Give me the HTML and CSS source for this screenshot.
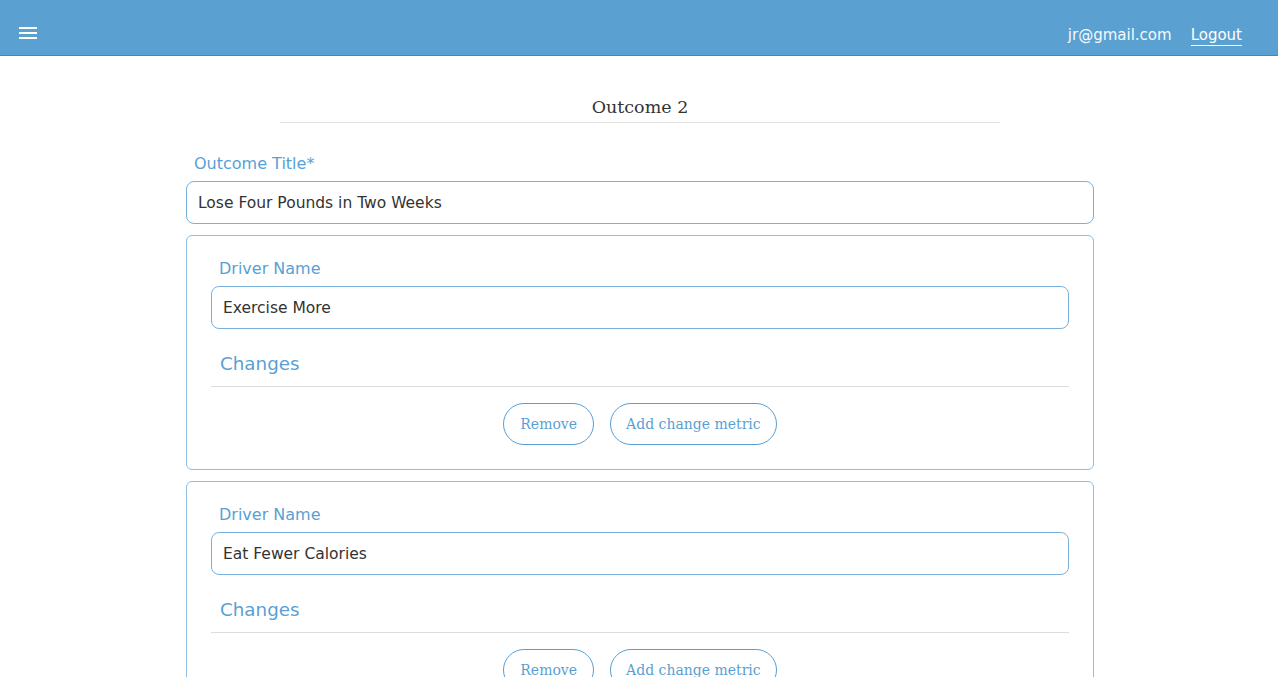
FILE: index.html
```html
<!DOCTYPE html>
<html>
<head>
<meta charset="utf-8">
<link rel="stylesheet" href="styles.css">
</head>
<body>
<header class="topbar">
  <button class="menu-btn" aria-label="menu">
    <svg width="18" height="12" viewBox="0 0 18 12"><rect x="0" y="0" width="18" height="2" fill="#fff"/><rect x="0" y="5" width="18" height="2" fill="#fff"/><rect x="0" y="10" width="18" height="2" fill="#fff"/></svg>
  </button>
  <div class="user">
    <span class="email">jr@gmail.com</span>
    <a class="logout" href="#">Logout</a>
  </div>
</header>
<main class="page">
  <h2 class="heading">Outcome 2</h2>
  <div class="form">
    <label class="label">Outcome Title*</label>
    <div class="input">Lose Four Pounds in Two Weeks</div>

    <section class="card">
      <label class="label">Driver Name</label>
      <div class="input">Exercise More</div>
      <h3 class="changes">Changes</h3>
      <div class="actions">
        <button class="pill">Remove</button>
        <button class="pill">Add change metric</button>
      </div>
    </section>

    <section class="card">
      <label class="label">Driver Name</label>
      <div class="input">Eat Fewer Calories</div>
      <h3 class="changes">Changes</h3>
      <div class="actions">
        <button class="pill">Remove</button>
        <button class="pill">Add change metric</button>
      </div>
    </section>
  </div>
</main>
</body>
</html>
```
FILE: styles.css
```css
* { box-sizing: border-box; }
html, body { margin: 0; padding: 0; background: #fff; }
body { font-family: "DejaVu Sans", Verdana, sans-serif; color: #333; height: 677px; overflow: hidden; }

.topbar {
  height: 56px;
  background: #5aa1d1;
  border-bottom: 1px solid #3f88c4;
  display: flex;
  align-items: center;
  justify-content: space-between;
  padding: 10px 36px 0 19px;
}
.menu-btn { background: none; border: 0; padding: 0; display: flex; cursor: pointer; }
.user { display: flex; align-items: center; gap: 19px; color: #fff; font-size: 15px; margin-top: 4px; }
.email { color: #f4f9fd; }
.logout { color: #fff; text-decoration: none; border-bottom: 1.5px solid #fff; padding-bottom: 1px; line-height: 18px; margin-top: 2px; }

.page { width: 910px; margin: 0 auto; padding-left: 2px; }
.heading {
  width: 720px; margin: 40px auto 0;
  font-family: "DejaVu Serif", Georgia, serif;
  font-weight: normal; font-size: 17.5px; color: #333;
  text-align: center; padding-bottom: 4px;
  border-bottom: 1px solid #e2e2e2;
  line-height: 22px;
}
.form { padding-top: 31px; }
.label { display: block; color: #5a9fd4; font-size: 16px; line-height: 19px; padding-left: 8px; margin-bottom: 8px; }
.input {
  height: 43px; border: 1px solid #79b1dd; border-radius: 8px;
  padding: 0 11px; display: flex; align-items: center;
  font-size: 15.5px; color: #333;
}
.card {
  margin-top: 11px;
  border: 1px solid #8fbfe4; border-radius: 6px;
  padding: 23px 24px 24px;
}
.card + .card { margin-top: 11px; }
.changes {
  margin: 24px 0 0; font-weight: normal; font-size: 18.3px; color: #5a9fd4;
  padding-left: 9px; padding-bottom: 11px; line-height: 22px;
  border-bottom: 1px solid #dcdcdc;
}
.actions { display: flex; justify-content: center; gap: 16px; margin-top: 16px; }
.pill {
  height: 42px; padding: 0 16px; border: 1px solid #5a9fd4; border-radius: 21px;
  background: #fff; color: #5a9fd4;
  font-family: "DejaVu Serif", Georgia, serif; font-size: 14px;
}
.pill:last-child { padding: 0 15px; }
```
